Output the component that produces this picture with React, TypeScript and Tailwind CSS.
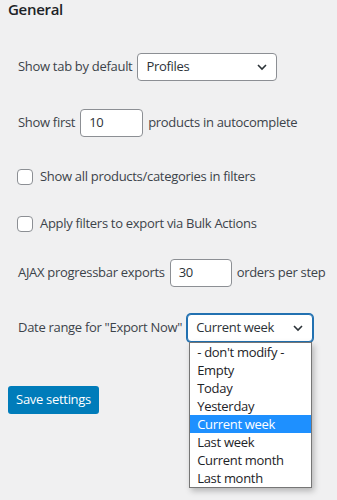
import React from 'react';

const font = { fontFamily: '"Open Sans", "Noto Sans", sans-serif' };

const Chevron: React.FC = () => (
  <svg width="16" height="16" viewBox="0 0 16 16" className="shrink-0">
    <path d="M4 6l4 4 4-4" fill="none" stroke="#2c3338" strokeWidth="1.6" />
  </svg>
);

const Checkbox: React.FC = () => (
  <span className="inline-block w-[16px] h-[16px] rounded-[4px] border border-[#8c8f94] bg-white shrink-0" />
);

const options = [
  "- don't modify -",
  'Empty',
  'Today',
  'Yesterday',
  'Current week',
  'Last week',
  'Current month',
  'Last month',
];

const App: React.FC = () => {
  return (
    <div
      className="w-[337px] h-[500px] bg-[#f0f0f1] text-[#3c434a] text-[13px] tracking-[-0.3px] whitespace-nowrap overflow-hidden"
      style={font}
    >
      <h2 className="pl-[8px] text-[15px] font-semibold text-[#1d2327] leading-[19px]">General</h2>

      <div className="pl-[18px] flex flex-col">
        <div className="mt-[34px] h-[28px] flex items-center">
          <span>Show tab by default</span>
          <div className="ml-[5px] w-[140px] h-[28px] bg-white border border-[#8c8f94] rounded-[4px] flex items-center justify-between pl-[8px] pr-[6px] text-[#2c3338]">
            <span>Profiles</span>
            <Chevron />
          </div>
        </div>

        <div className="mt-[28px] h-[28px] flex items-center">
          <span>Show first</span>
          <div className="ml-[5px] w-[63px] h-[28px] bg-white border border-[#8c8f94] rounded-[4px] flex items-center pl-[8px] text-[#2c3338]">
            10
          </div>
          <span className="ml-[5px]">products in autocomplete</span>
        </div>

        <div className="mt-[32px] h-[16px] flex items-center -ml-[1px]">
          <Checkbox />
          <span className="ml-[7px]">Show all products/categories in filters</span>
        </div>

        <div className="mt-[31px] h-[16px] flex items-center -ml-[1px]">
          <Checkbox />
          <span className="ml-[7px]">Apply filters to export via Bulk Actions</span>
        </div>

        <div className="mt-[27px] h-[28px] flex items-center">
          <span>AJAX progressbar exports</span>
          <div className="ml-[5px] w-[62px] h-[28px] bg-white border border-[#8c8f94] rounded-[4px] flex items-center pl-[8px] text-[#2c3338]">
            30
          </div>
          <span className="ml-[5px]">orders per step</span>
        </div>

        <div className="mt-[27px] h-[28px] flex items-center">
          <span>Date range for "Export Now"</span>
          <div className="relative ml-[5px]">
            <div className="w-[126px] h-[28px] bg-white border border-[#2271b1] shadow-[0_0_0_1px_#2271b1] rounded-[4px] flex items-center justify-between pl-[8px] pr-[6px] text-[#2c3338]">
              <span>Current week</span>
              <Chevron />
            </div>
            <ul className="absolute left-[2px] top-[28px] w-[123px] bg-white border border-[#767676] shadow-[2px_3px_6px_rgba(0,0,0,0.25)] text-[#1d2327] z-10">
              {options.map((o) => (
                <li
                  key={o}
                  className={
                    'h-[18px] leading-[18px] pl-[7px] ' +
                    (o === 'Current week' ? 'bg-[#1e90ff] text-white' : '')
                  }
                >
                  {o}
                </li>
              ))}
            </ul>
          </div>
        </div>
      </div>

      <button className="ml-[8px] mt-[44px] w-[91px] h-[28px] bg-[#007cba] text-white rounded-[3px] text-[13px]">
        Save settings
      </button>
    </div>
  );
};

export default App;
